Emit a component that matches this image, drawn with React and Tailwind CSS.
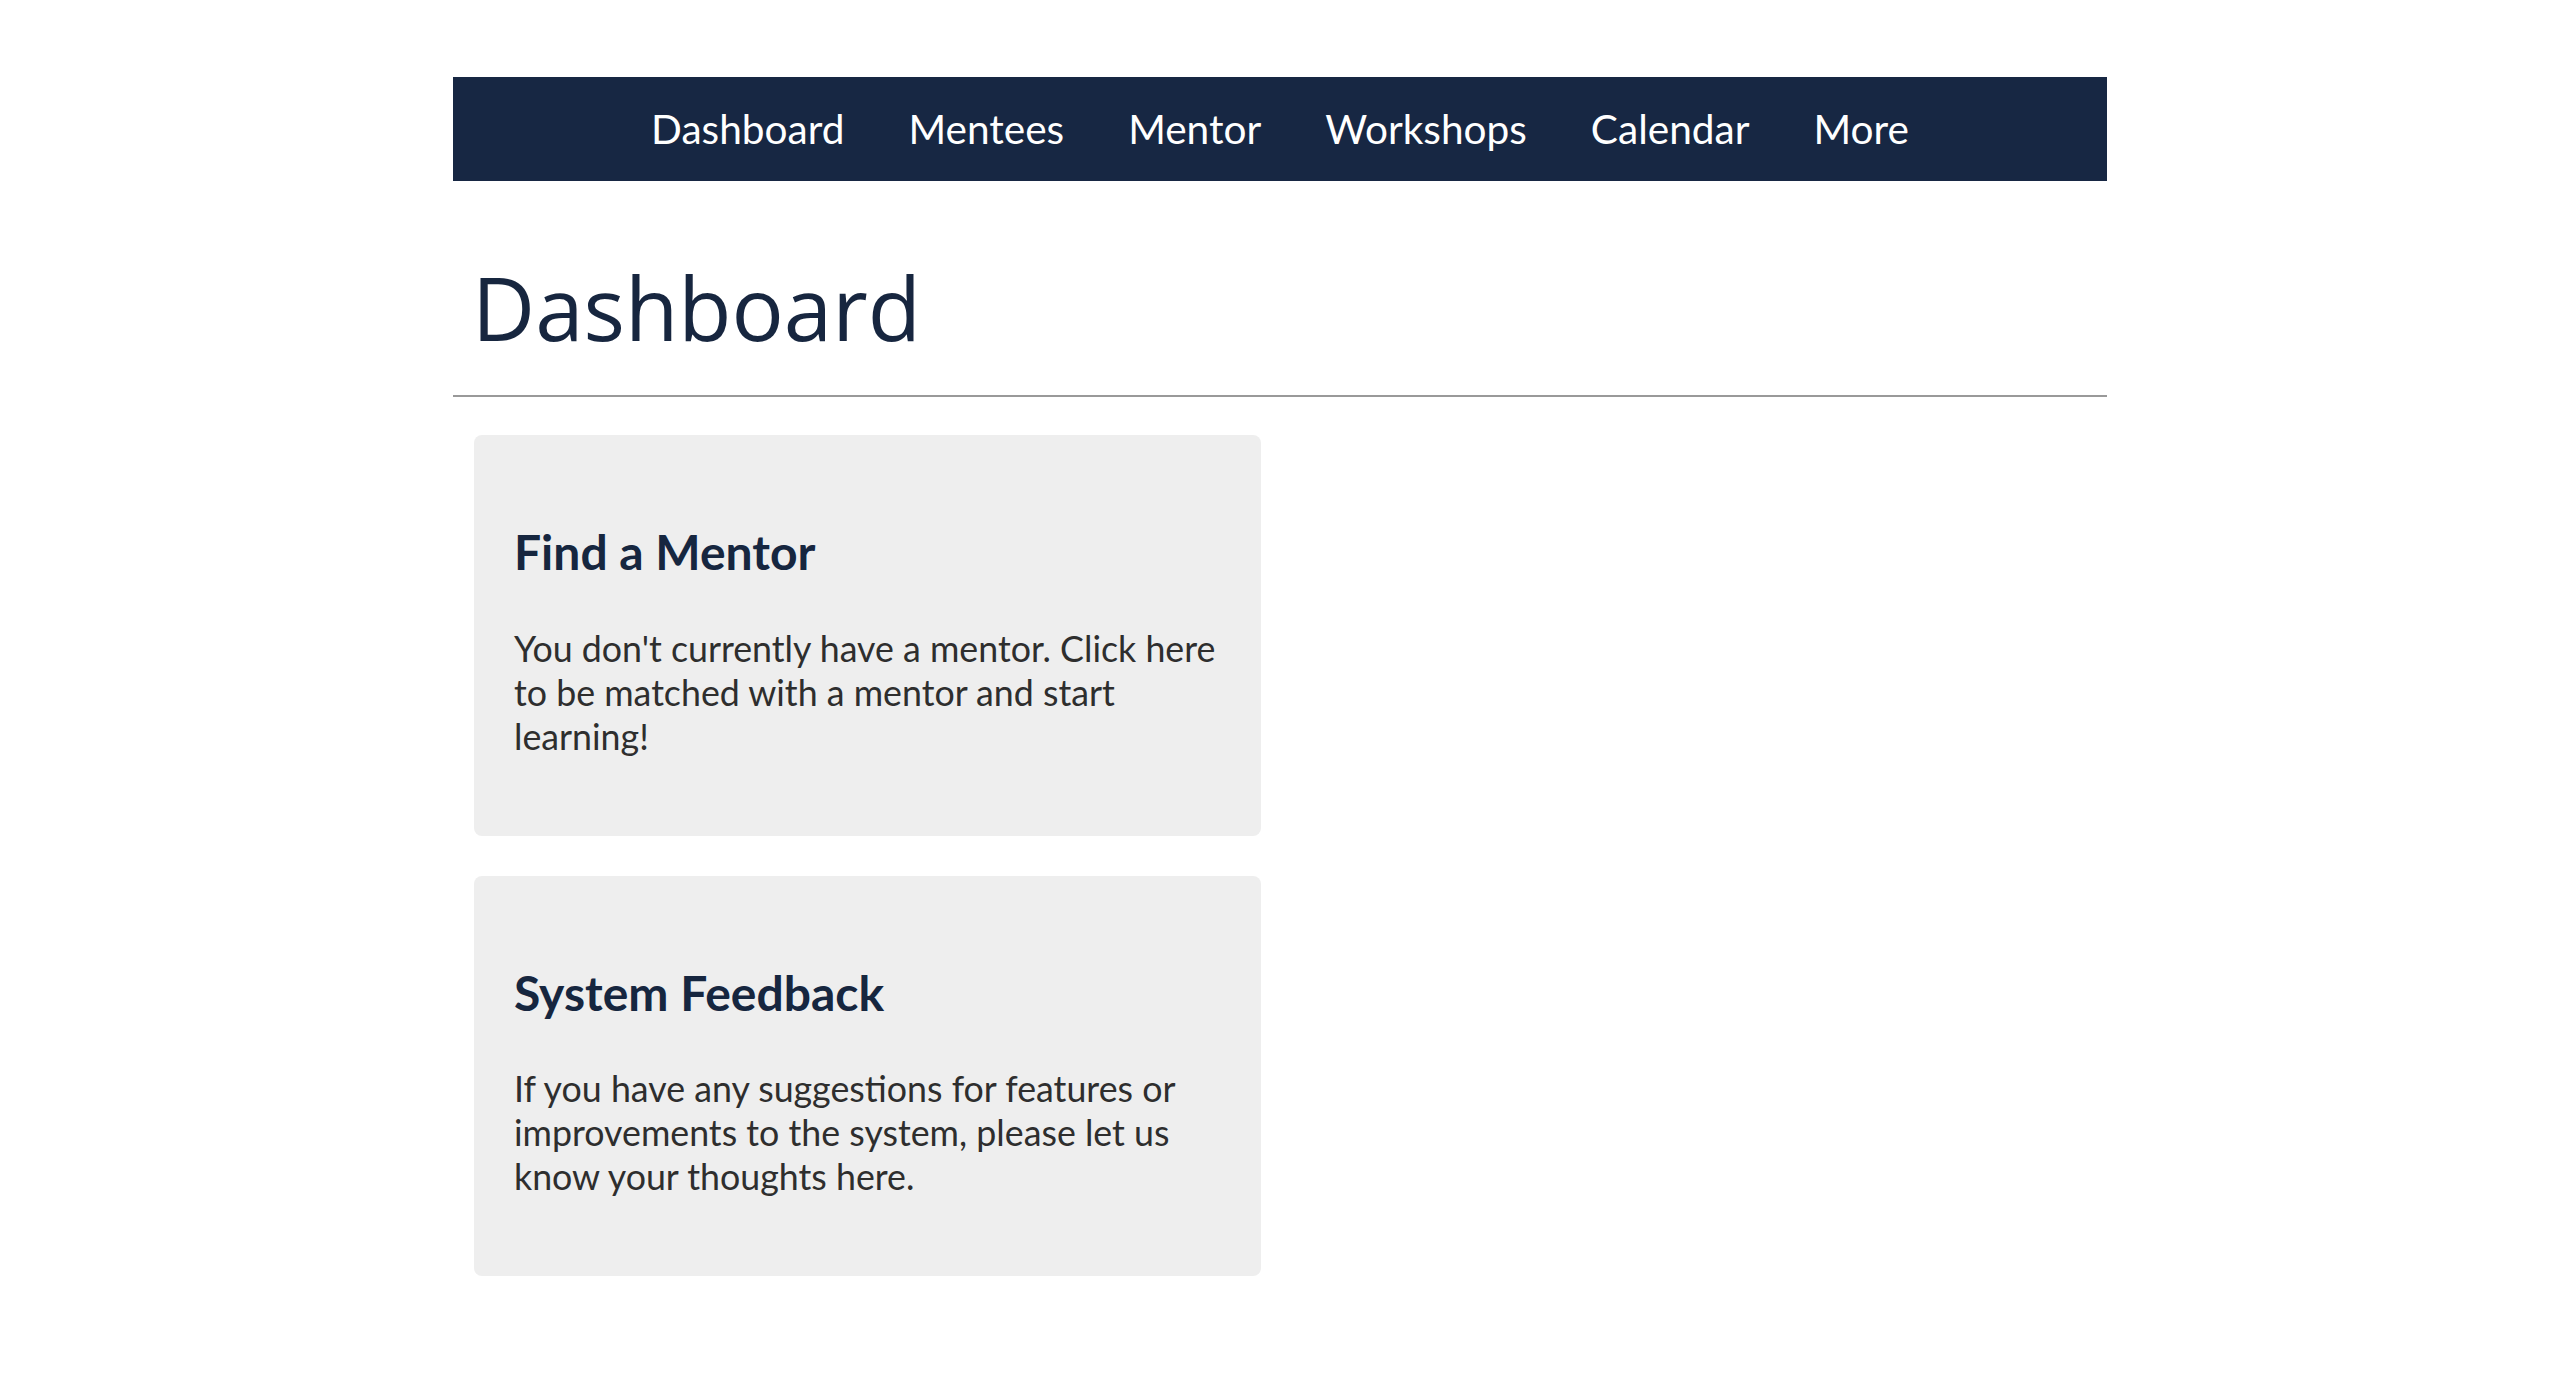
const navItems = ["Dashboard", "Mentees", "Mentor", "Workshops", "Calendar", "More"];

const cards = [
  {
    title: "Find a Mentor",
    body: "You don't currently have a mentor. Click here to be matched with a mentor and start learning!",
  },
  {
    title: "System Feedback",
    body: "If you have any suggestions for features or improvements to the system, please let us know your thoughts here.",
  },
];

export default function App() {
  return (
    <div className="min-h-screen bg-white pt-[77px] font-['Lato',sans-serif]">
      <div className="mx-auto w-[1654px]">
        <nav className="flex h-[104px] items-center justify-center bg-[#172743]">
          {navItems.map((item) => (
            <a key={item} href="#" className="px-8 text-[40.6px] leading-none text-white">
              {item}
            </a>
          ))}
        </nav>

        <h1 className="ml-[19px] mt-[66px] font-['Open_Sans',sans-serif] text-[87px] font-normal leading-[120px] text-[#17263f]">
          Dashboard
        </h1>
        <div className="mt-[28px] h-[2px] bg-[#999999]" />

        <div className="ml-[21px] mt-[38px] flex flex-col gap-[40px]">
          {cards.map((card) => (
            <div key={card.title} className="w-[787px] rounded-lg bg-[#eeeeee] px-[40px] pb-[77px] pt-[88px]">
              <h2 className="text-[48px] font-bold leading-[57.6px] text-[#16263f]">{card.title}</h2>
              <p className="mt-[46px] text-[35.75px] leading-[44px] text-[#2e2e2e]">{card.body}</p>
            </div>
          ))}
        </div>
      </div>
    </div>
  );
}
